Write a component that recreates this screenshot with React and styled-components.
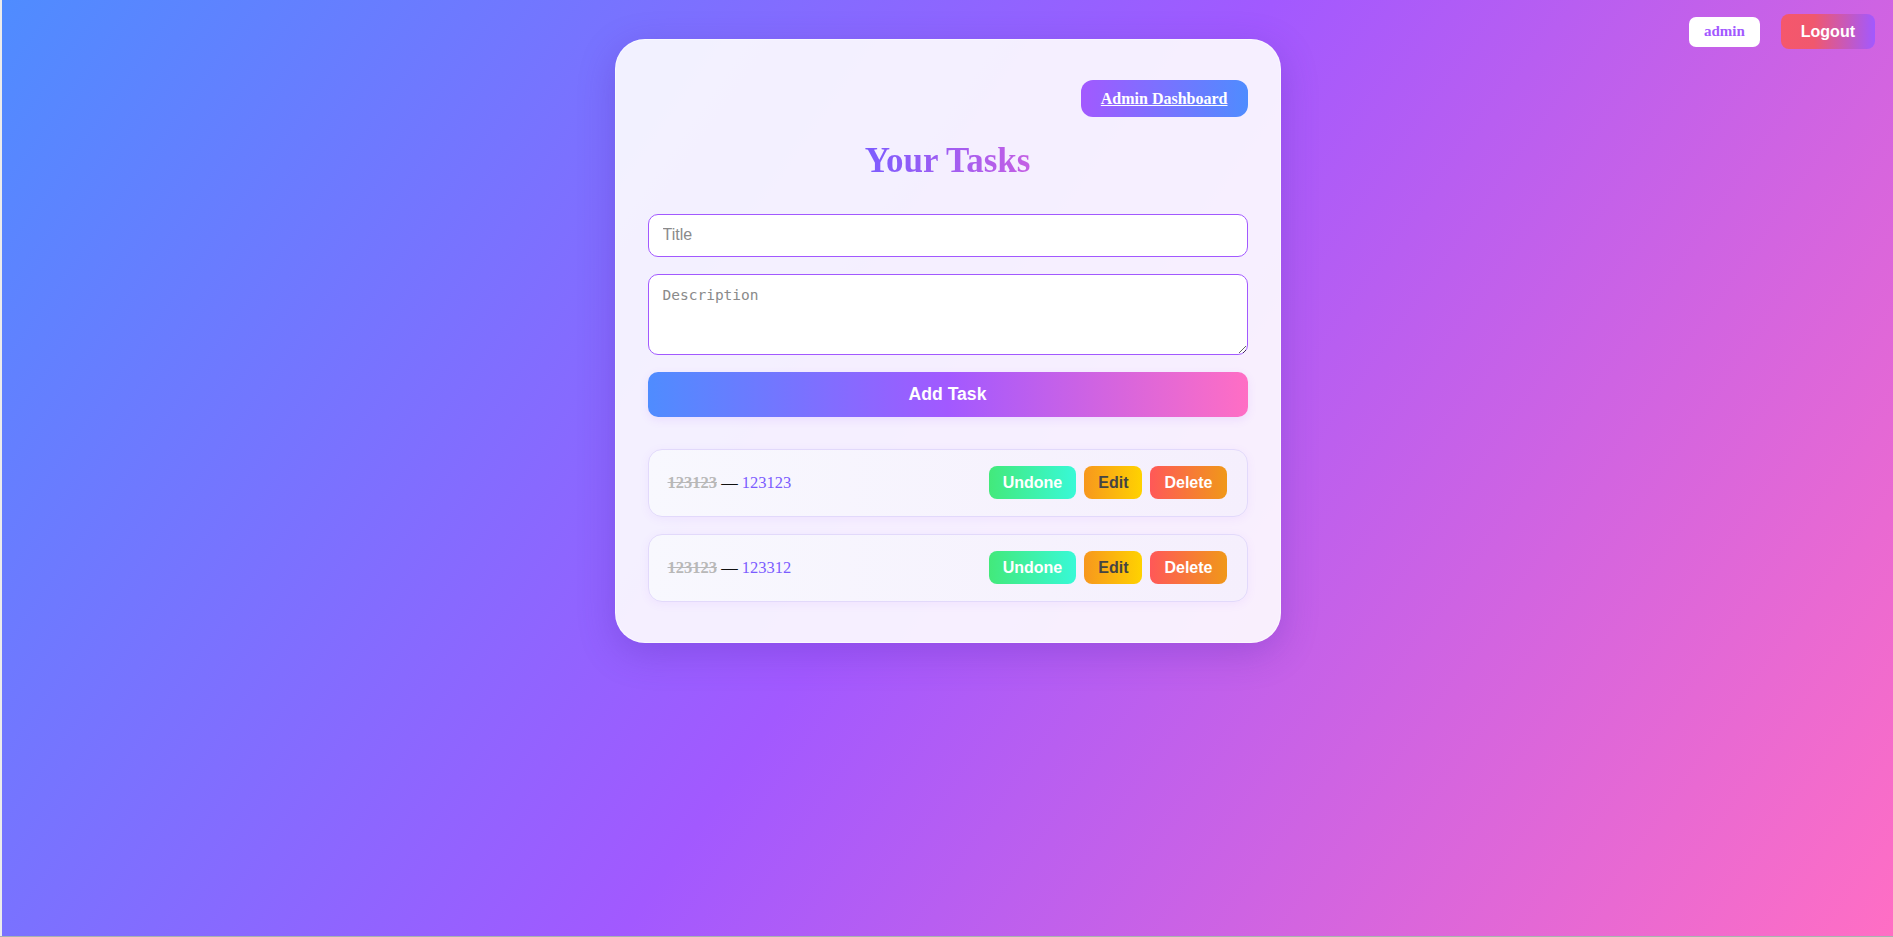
import React from "react";
import styled, { createGlobalStyle } from "styled-components";

const Global = createGlobalStyle`
  html, body { margin: 0; padding: 0; }
  body { background: #a9b2b0; font-family: "Liberation Serif", "Times New Roman", serif; }
  * { box-sizing: border-box; }
`;

const Page = styled.div`
  position: relative;
  min-height: 936px;
  padding: 39px 0 40px;
  border-left: 2px solid #ececec;
  background: linear-gradient(125deg, #4f8cff 0%, #a259ff 50%, #ff6ec4 100%);
`;

const UserBar = styled.div`
  position: absolute;
  top: 14px;
  right: 18px;
  display: flex;
  align-items: center;
  gap: 21px;
`;

const UserBadge = styled.span`
  display: inline-flex;
  align-items: center;
  justify-content: center;
  height: 30px;
  padding: 0 15px;
  background: #fff;
  color: #a259ff;
  border-radius: 7px;
  font-family: "Liberation Serif", serif;
  font-weight: 700;
  font-size: 15px;
`;

const LogoutButton = styled.button`
  height: 35px;
  padding: 0 20px;
  border: none;
  border-radius: 8px;
  color: #fff;
  font-family: "Liberation Sans", Arial, sans-serif;
  font-weight: 700;
  font-size: 16px;
  background: linear-gradient(90deg, #f5576c 0%, #f0586e 35%, #a259ff 100%);
`;

const Card = styled.div`
  width: 666px;
  margin: 0 auto;
  padding: 40px 32px 40px;
  border: 1px solid rgba(255, 255, 255, 0.5);
  border-radius: 30px;
  background: rgba(255, 255, 255, 0.9);
  box-shadow: 0 10px 36px rgba(80, 40, 170, 0.28);
`;

const TopRow = styled.div`
  display: flex;
  justify-content: flex-end;
`;

const DashLink = styled.a`
  display: inline-flex;
  align-items: center;
  height: 37px;
  padding: 0 20px;
  border-radius: 12px;
  color: #fff;
  font-family: "Liberation Serif", serif;
  font-weight: 700;
  font-size: 16px;
  text-decoration: underline;
  background: linear-gradient(90deg, #a259ff, #4f8cff);
  cursor: pointer;
`;

const Heading = styled.h2`
  margin: 25px auto 33px;
  width: fit-content;
  font-family: "Liberation Serif", serif;
  font-weight: 700;
  font-size: 35px;
  line-height: 1.107;
  background: linear-gradient(90deg, #7c5cff, #c45fe4);
  -webkit-background-clip: text;
  background-clip: text;
  color: transparent;
`;

const Form = styled.div`
  display: flex;
  flex-direction: column;
  gap: 17px;
`;

const TextInput = styled.input`
  height: 43px;
  padding: 0 14px;
  border: 1.5px solid #a259ff;
  border-radius: 10px;
  background: #fff;
  font-family: "Liberation Sans", Arial, sans-serif;
  font-size: 16px;
  outline: none;
  &::placeholder { color: #8a8a8a; }
`;

const TextArea = styled.textarea`
  height: 81px;
  padding: 12px 14px;
  border: 1.5px solid #a259ff;
  border-radius: 10px;
  background: #fff;
  font-family: "DejaVu Sans Mono", monospace;
  font-size: 14.5px;
  outline: none;
  resize: vertical;
  &::placeholder { color: #8a8a8a; }
`;

const AddButton = styled.button`
  height: 45px;
  border: none;
  border-radius: 10px;
  color: #fff;
  font-family: "Liberation Sans", Arial, sans-serif;
  font-weight: 700;
  font-size: 17.6px;
  background: linear-gradient(90deg, #4f8cff 0%, #a259ff 50%, #ff6ec4 100%);
  box-shadow: 0 3px 10px rgba(162, 89, 255, 0.12);
`;

const List = styled.ul`
  list-style: none;
  margin: 32px 0 0;
  padding: 0;
  display: flex;
  flex-direction: column;
  gap: 17px;
`;

const Item = styled.li`
  display: flex;
  align-items: center;
  justify-content: space-between;
  height: 68px;
  padding: 0 20px 0 19px;
  border: 1px solid #e2d9fb;
  border-radius: 14px;
  background: linear-gradient(90deg, #f8f8fe, #f5effd);
  box-shadow: 0 2px 10px rgba(162, 89, 255, 0.08);
`;

const ItemText = styled.span`
  font-family: "Liberation Serif", serif;
  font-size: 16.5px;
  color: #111;
`;

const DoneTitle = styled.span`
  color: #b8b8b8;
  font-weight: 700;
  text-decoration: line-through;
`;

const Desc = styled.span`
  color: #7b5cff;
`;

const Actions = styled.div`
  display: flex;
  gap: 8px;
`;

const variants = {
  undone: { bg: "linear-gradient(90deg, #43e97b, #38f9d7)", color: "#fff" },
  edit: { bg: "linear-gradient(90deg, #f7971e, #ffd200)", color: "#444" },
  delete: { bg: "linear-gradient(90deg, #ff5858, #f09819)", color: "#fff" },
};

const ActionButton = styled.button`
  height: 33px;
  padding: 0 14px;
  border: none;
  border-radius: 8px;
  font-family: "Liberation Sans", Arial, sans-serif;
  font-weight: 700;
  font-size: 16px;
  color: ${(p) => variants[p.$kind].color};
  background: ${(p) => variants[p.$kind].bg};
`;

const tasks = [
  { title: "123123", description: "123123" },
  { title: "123123", description: "123312" },
];

export default function App() {
  return (
    <>
      <Global />
      <Page>
        <UserBar>
          <UserBadge>admin</UserBadge>
          <LogoutButton>Logout</LogoutButton>
        </UserBar>
        <Card>
          <TopRow>
            <DashLink>Admin Dashboard</DashLink>
          </TopRow>
          <Heading>Your Tasks</Heading>
          <Form>
            <TextInput placeholder="Title" />
            <TextArea placeholder="Description" />
            <AddButton>Add Task</AddButton>
          </Form>
          <List>
            {tasks.map((t, i) => (
              <Item key={i}>
                <ItemText>
                  <DoneTitle>{t.title}</DoneTitle> — <Desc>{t.description}</Desc>
                </ItemText>
                <Actions>
                  <ActionButton $kind="undone">Undone</ActionButton>
                  <ActionButton $kind="edit">Edit</ActionButton>
                  <ActionButton $kind="delete">Delete</ActionButton>
                </Actions>
              </Item>
            ))}
          </List>
        </Card>
      </Page>
    </>
  );
}
